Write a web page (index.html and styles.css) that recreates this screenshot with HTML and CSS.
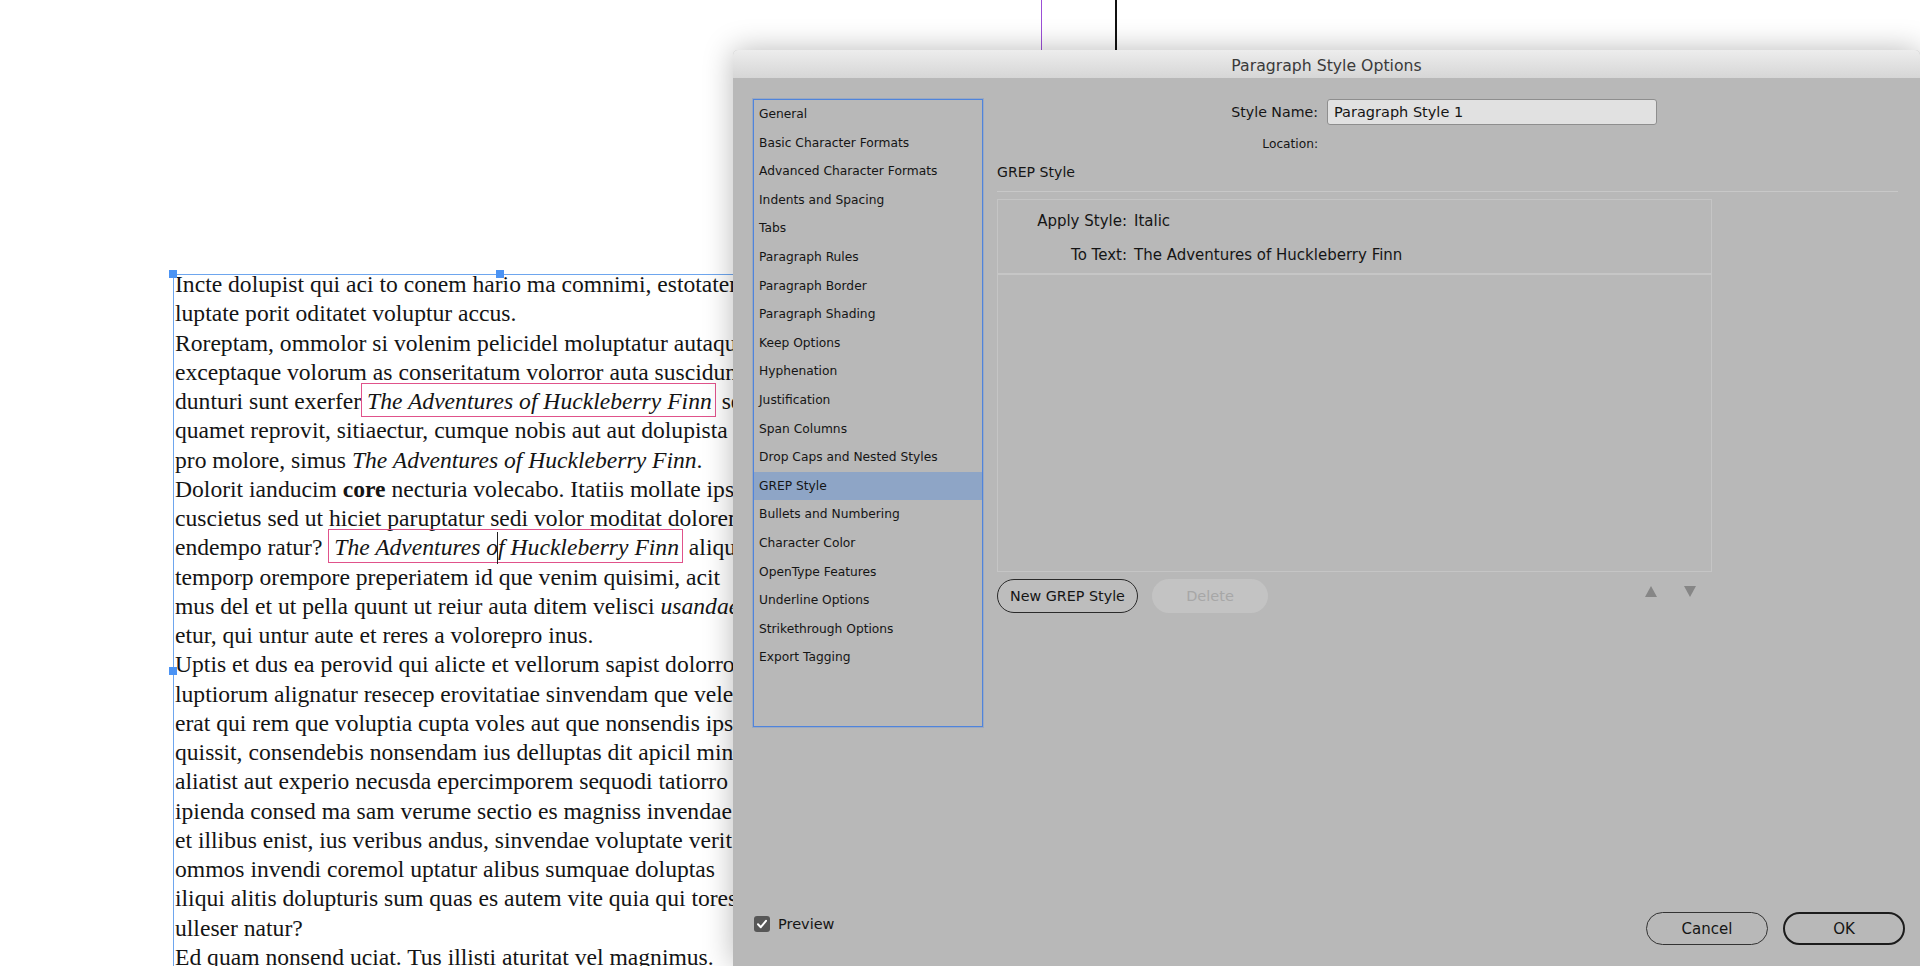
FILE: index.html
```
<!DOCTYPE html>
<html>
<head>
<meta charset="utf-8">
<link rel="stylesheet" href="styles.css">
</head>
<body>
<div class="canvas">
  <div class="guide guide-purple"></div>
  <div class="guide guide-black"></div>
  <div class="frame">
    <span class="handle h-tl"></span>
    <span class="handle h-tm"></span>
    <span class="handle h-ml"></span>
    <span class="cursor"></span>
    <div class="text">
      <div>Incte dolupist qui aci to conem hario ma comnimi, estotatem quiae</div>
      <div>luptate porit oditatet voluptur accus.</div>
      <div>Roreptam, ommolor si volenim pelicidel moluptatur autaquae</div>
      <div>exceptaque volorum as conseritatum volorror auta suscidunt</div>
      <div>dunturi sunt exerfer<span class="hit"><i>The Adventures of Huckleberry Finn</i></span> sequam</div>
      <div>quamet reprovit, sitiaectur, cumque nobis aut aut dolupista</div>
      <div>pro molore, simus <i>The Adventures of Huckleberry Finn</i>.</div>
      <div>Dolorit ianducim <b>core</b> necturia volecabo. Itatiis mollate ipsam</div>
      <div>cuscietus sed ut hiciet paruptatur sedi volor moditat dolorem</div>
      <div>endempo ratur? <span class="hit"><i>The Adventures of Huckleberry Finn</i></span> aliquam</div>
      <div>temporp orempore preperiatem id que venim quisimi, acit</div>
      <div>mus del et ut pella quunt ut reiur auta ditem velisci <i>usandae</i></div>
      <div>etur, qui untur aute et reres a volorepro inus.</div>
      <div>Uptis et dus ea perovid qui alicte et vellorum sapist dolorro</div>
      <div>luptiorum alignatur resecep erovitatiae sinvendam que veles</div>
      <div>erat qui rem que voluptia cupta voles aut que nonsendis ipsam</div>
      <div>quissit, consendebis nonsendam ius delluptas dit apicil mint</div>
      <div>aliatist aut experio necusda epercimporem sequodi tatiorro</div>
      <div>ipienda consed ma sam verume sectio es magniss invendae</div>
      <div>et illibus enist, ius veribus andus, sinvendae voluptate verit</div>
      <div>ommos invendi coremol uptatur alibus sumquae doluptas</div>
      <div>iliqui alitis dolupturis sum quas es autem vite quia qui tores</div>
      <div>ulleser natur?</div>
      <div>Ed quam nonsend uciat. Tus illisti aturitat vel magnimus.</div>
    </div>
  </div>
</div>

<div class="dialog">
  <div class="titlebar">Paragraph Style Options</div>
  <div class="dlg-body">
    <div class="list">
      <div class="item">General</div>
      <div class="item">Basic Character Formats</div>
      <div class="item">Advanced Character Formats</div>
      <div class="item">Indents and Spacing</div>
      <div class="item">Tabs</div>
      <div class="item">Paragraph Rules</div>
      <div class="item">Paragraph Border</div>
      <div class="item">Paragraph Shading</div>
      <div class="item">Keep Options</div>
      <div class="item">Hyphenation</div>
      <div class="item">Justification</div>
      <div class="item">Span Columns</div>
      <div class="item">Drop Caps and Nested Styles</div>
      <div class="item selected">GREP Style</div>
      <div class="item">Bullets and Numbering</div>
      <div class="item">Character Color</div>
      <div class="item">OpenType Features</div>
      <div class="item">Underline Options</div>
      <div class="item">Strikethrough Options</div>
      <div class="item">Export Tagging</div>
    </div>
    <div class="right">
      <div class="name-grid">
        <div class="name-label">Style Name:</div>
        <div class="name-input">Paragraph Style 1</div>
        <div class="loc-label">Location:</div>
        <div></div>
      </div>
      <div class="heading">GREP Style</div>
      <div class="sep"></div>
      <div class="box">
        <div class="box-head">
          <div class="lbl">Apply Style:</div><div class="val">Italic</div>
          <div class="lbl">To Text:</div><div class="val">The Adventures of Huckleberry Finn</div>
        </div>
      </div>
      <div class="btn-row">
        <div class="pill pill-new">New GREP Style</div>
        <div class="pill pill-del">Delete</div>
        <div class="arrows">
          <svg width="12" height="11" viewBox="0 0 12 11"><polygon points="6,0 12,11 0,11" fill="#868686"/></svg>
          <svg width="12" height="11" viewBox="0 0 12 11"><polygon points="0,0 12,0 6,11" fill="#868686"/></svg>
        </div>
      </div>
    </div>
  </div>
  <div class="footer">
    <div class="preview">
      <span class="checkbox"><svg width="16" height="16" viewBox="0 0 16 16"><path d="M4 8.3 L6.8 11.2 L12 4.8" fill="none" stroke="#ffffff" stroke-width="2" stroke-linecap="round" stroke-linejoin="round"/></svg></span>
      <span class="preview-text">Preview</span>
    </div>
    <div class="pill btn-cancel">Cancel</div>
    <div class="pill btn-ok">OK</div>
  </div>
</div>
</body>
</html>
```
FILE: styles.css
```
html, body {
  margin: 0;
  padding: 0;
}
body {
  width: 1920px;
  height: 966px;
  overflow: hidden;
  position: relative;
  background: #ffffff;
  font-family: "Liberation Serif", "Times New Roman", serif;
}
.canvas {
  box-sizing: border-box;
  height: 966px;
  padding: 274px 0 0 173px;
  overflow: hidden;
}
.guide {
  position: absolute;
  top: 0;
  height: 50px;
}
.guide-purple {
  left: 1041px;
  width: 1px;
  background: #9b4fd6;
}
.guide-black {
  left: 1115px;
  width: 2px;
  background: #111111;
}
.frame {
  position: relative;
  box-sizing: border-box;
  width: 654px;
  height: 692px;
  border-top: 1px solid #6ea6ee;
  border-left: 1px solid #6ea6ee;
}
.handle {
  position: absolute;
  width: 8px;
  height: 8px;
  background: #4b93f4;
}
.h-tl { left: -5px; top: -5px; }
.h-tm { left: 322px; top: -5px; }
.h-ml { left: -5px; top: 392px; }
.cursor {
  position: absolute;
  left: 323px;
  top: 257px;
  width: 1px;
  height: 32px;
  background: #222;
  z-index: 2;
}
.text {
  margin-top: -5px;
  padding-left: 1px;
  width: 558px;
  height: 696px;
  overflow: hidden;
  font-size: 23.6px;
  line-height: 29.25px;
  white-space: nowrap;
  color: #141414;
}
.hit {
  border: 1px solid #e0528b;
  padding: 4px 3px 2px 5px;
}

/* dialog */
.dialog {
  position: absolute;
  left: 733px;
  top: 50px;
  width: 1187px;
  height: 916px;
  background: #b8b8b8;
  border-radius: 5px 5px 0 0;
  box-shadow: 0 0 30px rgba(0, 0, 0, 0.28);
  font-family: "DejaVu Sans", "Liberation Sans", sans-serif;
  color: #151515;
}
.titlebar {
  box-sizing: border-box;
  height: 28px;
  padding-top: 3px;
  line-height: 25px;
  text-align: center;
  font-size: 15.7px;
  color: #3a3a3a;
  background: linear-gradient(#ededed, #d6d6d6);
  border-radius: 5px 5px 0 0;
}
.dlg-body {
  display: grid;
  grid-template-columns: 230px 901px;
  column-gap: 14px;
  padding: 21px 0 0 20px;
}
.list {
  box-sizing: border-box;
  height: 628px;
  border: 1px solid #4f84dc;
  box-shadow: 0 0 0 1px rgba(90, 135, 215, 0.3);
}
.item {
  height: 28.6px;
  line-height: 28.6px;
  padding-left: 5px;
  font-size: 12.25px;
  white-space: nowrap;
}
.item.selected {
  background: #8ea5c6;
}
.name-grid {
  display: grid;
  grid-template-columns: 321px 330px;
  column-gap: 9px;
  align-items: center;
}
.name-label {
  text-align: right;
  font-size: 14.2px;
}
.name-input {
  box-sizing: border-box;
  height: 26px;
  line-height: 24px;
  padding-left: 6px;
  border: 1px solid #8e8e8e;
  border-radius: 3px;
  background: #e1e1e1;
  font-size: 14.5px;
}
.loc-label {
  margin-top: 11px;
  line-height: 16px;
  text-align: right;
  font-size: 12.2px;
}
.heading {
  margin-top: 11px;
  line-height: 18px;
  font-size: 14.1px;
}
.sep {
  margin-top: 10px;
  border-top: 1px solid #c8c8c8;
}
.box {
  box-sizing: border-box;
  margin-top: 7px;
  width: 715px;
  height: 373px;
  border: 1px solid #c5c5c5;
}
.box-head {
  box-sizing: border-box;
  height: 75px;
  padding-top: 11px;
  display: grid;
  grid-template-columns: 129px auto;
  column-gap: 7px;
  row-gap: 14px;
  align-content: start;
  border-bottom: 2px solid #c6c6c6;
  font-size: 15px;
  line-height: 20px;
}
.lbl {
  text-align: right;
}
.btn-row {
  margin-top: 7px;
  width: 715px;
  height: 34px;
  display: flex;
}
.pill {
  box-sizing: border-box;
  display: flex;
  align-items: center;
  justify-content: center;
  border-radius: 17px;
  white-space: nowrap;
}
.pill-new {
  width: 141px;
  height: 34px;
  border: 1.5px solid #2a2a2a;
  background: #bdbdbd;
  font-size: 14.3px;
}
.pill-del {
  width: 116px;
  height: 34px;
  margin-left: 14px;
  background: #c3c3c3;
  color: #a7a7a7;
  font-size: 14.5px;
}
.arrows {
  margin-left: auto;
  align-self: flex-start;
  margin-top: 7px;
  padding-right: 16px;
  display: flex;
  gap: 27px;
}
.arrows svg {
  display: block;
}
.footer {
  margin-top: 185px;
  height: 33px;
  display: flex;
  align-items: center;
  padding: 0 15px 0 21px;
}
.preview {
  align-self: flex-start;
  margin-top: 4px;
  display: flex;
  align-items: center;
}
.checkbox {
  width: 16px;
  height: 16px;
  border-radius: 3px;
  background: #575757;
  display: block;
}
.checkbox svg {
  display: block;
}
.preview-text {
  margin-left: 8px;
  font-size: 14.5px;
  line-height: 16px;
}
.btn-cancel {
  margin-left: auto;
  width: 122px;
  height: 33px;
  border: 1.5px solid #333333;
  font-size: 15px;
}
.btn-ok {
  margin-left: 15px;
  width: 122px;
  height: 33px;
  border: 2.5px solid #1c1c1c;
  font-size: 15px;
}
```
